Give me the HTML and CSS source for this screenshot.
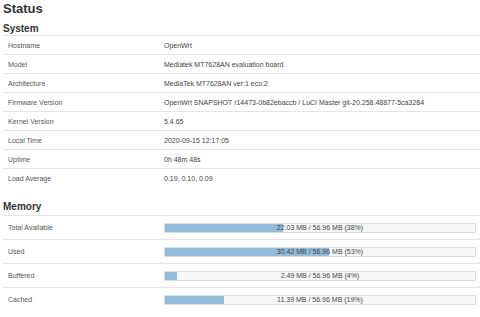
FILE: index.html
```html
<!DOCTYPE html>
<html>
<head>
<meta charset="utf-8">
<link rel="stylesheet" href="styles.css">
</head>
<body>
<h1 class="title">Status</h1>
<h2 class="section">System</h2>
<div class="table">
  <div class="row"><div class="label">Hostname</div><div class="value">OpenWrt</div></div>
  <div class="row"><div class="label">Model</div><div class="value">Mediatek MT7628AN evaluation board</div></div>
  <div class="row"><div class="label">Architecture</div><div class="value">MediaTek MT7628AN ver:1 eco:2</div></div>
  <div class="row"><div class="label">Firmware Version</div><div class="value">OpenWrt SNAPSHOT r14473-0b82ebaccb / LuCI Master git-20.258.48877-5ca3284</div></div>
  <div class="row"><div class="label">Kernel Version</div><div class="value">5.4.65</div></div>
  <div class="row"><div class="label">Local Time</div><div class="value">2020-09-15 12:17:05</div></div>
  <div class="row"><div class="label">Uptime</div><div class="value">0h 48m 48s</div></div>
  <div class="row"><div class="label">Load Average</div><div class="value">0.19, 0.10, 0.09</div></div>
</div>
<h2 class="section mem">Memory</h2>
<div class="table">
  <div class="row tall"><div class="label">Total Available</div><div class="value"><div class="bar"><div class="fill" style="width:38%"></div><span class="bartext">22.03 MB / 56.96 MB (38%)</span></div></div></div>
  <div class="row tall"><div class="label">Used</div><div class="value"><div class="bar"><div class="fill" style="width:53%"></div><span class="bartext">30.42 MB / 56.96 MB (53%)</span></div></div></div>
  <div class="row tall"><div class="label">Buffered</div><div class="value"><div class="bar"><div class="fill" style="width:4%"></div><span class="bartext">2.49 MB / 56.96 MB (4%)</span></div></div></div>
  <div class="row tall"><div class="label">Cached</div><div class="value"><div class="bar"><div class="fill" style="width:19%"></div><span class="bartext">11.39 MB / 56.96 MB (19%)</span></div></div></div>
</div>
</body>
</html>
```
FILE: styles.css
```css
html, body {
  margin: 0;
  padding: 0;
  background: #fff;
}
body {
  font-family: "Liberation Sans", Arial, sans-serif;
  color: #404040;
  padding-left: 3px;
}
.title {
  margin: 0;
  font-size: 13px;
  font-weight: bold;
  line-height: 18px;
  color: #333;
}
.section {
  margin: 4px 0 0 0;
  font-size: 10px;
  font-weight: bold;
  line-height: 13px;
  color: #333;
}
.section.mem {
  margin: 13px 0 2px 0;
}
.table {
  display: flex;
  flex-direction: column;
}
.row {
  display: grid;
  grid-template-columns: 161px 1fr;
  align-items: center;
  height: 18px;
  border-top: 1px solid #e4e4e4;
  font-size: 7px;
}
.row.tall {
  height: 23px;
}
.label {
  padding-left: 5px;
  color: #555;
}
.value {
  color: #444;
  white-space: nowrap;
}
.bar {
  position: relative;
  width: 312px;
  height: 10px;
  border: 1px solid #ddd;
  background: #f7f7f7;
  box-sizing: border-box;
  border-radius: 1px;
}
.fill {
  height: 100%;
  background: #93bcdb;
}
.bartext {
  position: absolute;
  left: 0;
  right: 0;
  top: 0;
  bottom: 0;
  text-align: center;
  font-size: 7px;
  line-height: 8px;
  color: #444;
}
```
